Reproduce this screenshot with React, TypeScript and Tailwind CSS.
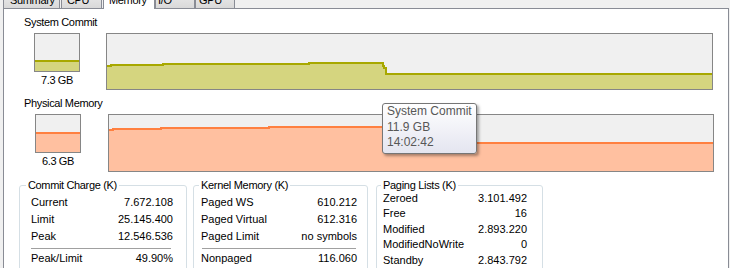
const tabs = [
  { label: "Summary", cls: "ml-[3px] w-[57px] pl-[6px]", sel: false },
  { label: "CPU", cls: "ml-[1px] w-[41px] pl-[5px]", sel: false },
  { label: "Memory", cls: "ml-[1px] w-[52px] pl-[5px]", sel: true },
  { label: "I/O", cls: "w-[40px] pl-[2px]", sel: false },
  { label: "GPU", cls: "w-[40px] pl-[3px]", sel: false },
];

function Tabs() {
  return (
    <div className="flex h-[8px] items-end">
      {tabs.map((t) =>
        t.sel ? (
          <div
            key={t.label}
            className={`${t.cls} relative z-10 -mb-px h-[18px] shrink-0 border border-b-0 border-[#898c95] bg-white pt-[2px] tracking-[-0.35px]`}
          >
            {t.label}
          </div>
        ) : (
          <div
            key={t.label}
            className={`${t.cls} h-[16px] shrink-0 border border-b-0 border-[#898c95] bg-linear-to-b from-[#ebebeb] to-[#d9d9d9] pt-[1px] tracking-[-0.35px]`}
          >
            {t.label}
          </div>
        )
      )}
    </div>
  );
}

function Gauge({ lineTop, fill, line }: { lineTop: number; fill: string; line: string }) {
  return (
    <div className="h-[39px] w-[46px] border border-[#868686] bg-[#f0f0f0]">
      <svg width="44" height="37" shapeRendering="crispEdges" className="block">
        <rect x="0" y={lineTop} width="44" height={37 - lineTop} fill={fill} />
        <rect x="0" y={lineTop} width="44" height="2" fill={line} />
      </svg>
    </div>
  );
}

function Graph({
  w,
  h,
  d,
  fill,
  line,
}: {
  w: number;
  h: number;
  d: string;
  fill: string;
  line: string;
}) {
  return (
    <svg width={w} height={h} shapeRendering="crispEdges" className="block">
      <path d={`${d} V${h} H0 Z`} fill={fill} />
      <path d={d} fill="none" stroke={line} strokeWidth="2" />
    </svg>
  );
}

function Row({ label, value, cls }: { label: string; value: string; cls: string }) {
  return (
    <div className={`flex justify-between ${cls}`}>
      <span>{label}</span>
      <span>{value}</span>
    </div>
  );
}

const YFILL = "#d5d57f";
const YLINE = "#a8a800";
const OFILL = "#ffc0a0";
const OLINE = "#ff8040";

export default function App() {
  return (
    <div className="relative h-[268px] w-[730px] overflow-hidden bg-[#f0f0f0] font-['Liberation_Sans',Arial,sans-serif] text-[11px] leading-[13px] text-black">
      <Tabs />
      <div className="ml-[3px] h-[270px] w-[726px] border border-[#898c95] bg-white pt-[7px]">
        <div className="ml-[20px] tracking-[-0.35px]">System Commit</div>
        <div className="mt-[4px] flex">
          <div className="ml-[30px] w-[46px] shrink-0">
            <Gauge lineTop={26} fill={YFILL} line={YLINE} />
            <div className="mt-[2px] text-center tracking-[-0.4px]">7.3 GB</div>
          </div>
          <div className="ml-[26px] h-[57px] w-[607px] shrink-0 border border-[#868686] bg-[#f0f0f0]">
            <Graph
              w={605}
              h={55}
              d="M0,32 H4 V31 H56 V30 H202 V29 H276 V32 H277 V34 H279 V40 H605"
              fill={YFILL}
              line={YLINE}
            />
          </div>
        </div>
        <div className="ml-[20px] mt-[7px] tracking-[-0.35px]">Physical Memory</div>
        <div className="mt-[4px] flex">
          <div className="ml-[31px] w-[46px] shrink-0">
            <Gauge lineTop={17} fill={OFILL} line={OLINE} />
            <div className="mt-[2px] text-center tracking-[-0.4px]">6.3 GB</div>
          </div>
          <div className="ml-[27px] h-[58px] w-[606px] shrink-0 border border-[#868686] bg-[#f0f0f0]">
            <Graph
              w={604}
              h={56}
              d="M0,15 H4 V14 H52 V13 H160 V12 H336 V28 H604"
              fill={OFILL}
              line={OLINE}
            />
          </div>
        </div>
        <div className="mt-[7px] flex items-start">
          <fieldset className="ml-[15px] h-[100px] w-[168px] shrink-0 rounded-[3px] border border-[#d5dfe5] pl-[6px] pr-[6px]">
            <legend className="px-[2px] tracking-[-0.35px]">Commit Charge (K)</legend>
            <div className="pt-[2px] leading-[17px]">
              <Row label="Current" value="7.672.108" cls="pl-[5px] pr-[7px]" />
              <Row label="Limit" value="25.145.400" cls="pl-[5px] pr-[7px]" />
              <Row label="Peak" value="12.546.536" cls="pl-[5px] pr-[7px]" />
              <div className="ml-[5px] mr-[9px] mt-[3px] h-px bg-[#a0a0a0]" />
              <div className="mt-[1px]">
                <Row label="Peak/Limit" value="49.90%" cls="pl-[5px] pr-[7px]" />
              </div>
            </div>
          </fieldset>
          <fieldset className="ml-[6px] h-[100px] w-[175px] shrink-0 rounded-[3px] border border-[#d5dfe5] pl-[5px] pr-[5px]">
            <legend className="px-[2px] tracking-[-0.3px]">Kernel Memory (K)</legend>
            <div className="pt-[2px] leading-[17px]">
              <Row label="Paged WS" value="610.212" cls="pl-[2px] pr-[5px]" />
              <Row label="Paged Virtual" value="612.316" cls="pl-[2px] pr-[5px]" />
              <Row label="Paged Limit" value="no symbols" cls="pl-[2px] pr-[5px]" />
              <div className="ml-[3px] mr-[6px] mt-[3px] h-px bg-[#a0a0a0]" />
              <div className="mt-[1px]">
                <Row label="Nonpaged" value="116.060" cls="pl-[2px] pr-[5px]" />
              </div>
            </div>
          </fieldset>
          <fieldset className="ml-[8px] h-[100px] w-[167px] shrink-0 rounded-[3px] border border-[#d5dfe5] pl-[4px] pr-[4px]">
            <legend className="px-[2px] tracking-[-0.3px]">Paging Lists (K)</legend>
            <div className="-mt-[1px] leading-[15.4px]">
              <Row label="Zeroed" value="3.101.492" cls="pl-[2px] pr-[11px]" />
              <Row label="Free" value="16" cls="pl-[2px] pr-[11px]" />
              <Row label="Modified" value="2.893.220" cls="pl-[2px] pr-[11px]" />
              <Row label="ModifiedNoWrite" value="0" cls="pl-[2px] pr-[11px]" />
              <Row label="Standby" value="2.843.792" cls="pl-[2px] pr-[11px]" />
            </div>
          </fieldset>
        </div>
      </div>
      <div className="absolute left-[382px] top-[103px] h-[51px] w-[95px] rounded-[3px] border border-[#767676] bg-linear-to-b from-white to-[#e4e5f0] pl-[4px] text-[12px] leading-[15.5px] text-[#575757] shadow-[2px_2px_3px_rgba(0,0,0,0.35)]">
        <div>System Commit</div>
        <div>11.9 GB</div>
        <div>14:02:42</div>
      </div>
    </div>
  );
}
